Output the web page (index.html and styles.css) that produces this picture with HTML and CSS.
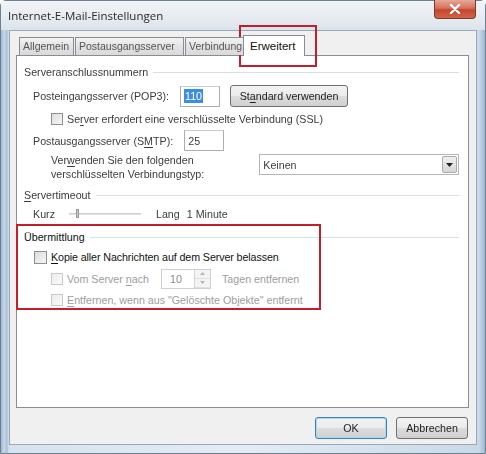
FILE: index.html
```html
<!DOCTYPE html>
<html>
<head>
<meta charset="utf-8">
<link rel="stylesheet" href="styles.css">
</head>
<body>
<div class="window">
  <div class="titlebar">
    <span class="title">Internet-E-Mail-Einstellungen</span>
    <span class="close"><svg width="12" height="10" viewBox="0 0 12 10"><path d="M2 1 L10 9 M10 1 L2 9" stroke="#fff" stroke-width="2.4" stroke-linecap="round"/></svg></span>
  </div>
  <div class="client">
    <div class="tabs">
      <div class="tab t1">Allgemein</div>
      <div class="tab t2">Postausgangsserver</div>
      <div class="tab t3">Verbindung</div>
      <div class="tab sel">Erweitert</div>
    </div>
    <div class="panel">
      <div class="group">
        <span class="glabel">Serveranschlussnummern</span><span class="gline"></span>
      </div>
      <div class="row pop">
        <span class="lbl">Posteingangsserver (POP3):</span>
        <span class="input in1"><span class="hl">110</span></span>
        <span class="btn std">St<u>a</u>ndard verwenden</span>
      </div>
      <div class="row ssl">
        <span class="cb"></span><span class="lbl">Se<u>r</u>ver erfordert eine verschlüsselte Verbindung (SSL)</span>
      </div>
      <div class="row smtp">
        <span class="lbl">Postausgangsserver (S<u>M</u>TP):</span>
        <span class="input in2">25</span>
      </div>
      <div class="row enc">
        <span class="lbl two">Ver<u>w</u>enden Sie den folgenden<br>verschlüsselten Verbindungstyp:</span>
        <span class="select"><span class="selval">Keinen</span><span class="drop"><svg width="7" height="4" viewBox="0 0 7 4"><path d="M0 0 H7 L3.5 4 Z" fill="#222"/></svg></span></span>
      </div>
      <div class="group g2">
        <span class="glabel"><u>S</u>ervertimeout</span><span class="gline"></span>
      </div>
      <div class="row slide">
        <span class="lbl">Kurz</span>
        <span class="slider"><span class="track"></span><span class="thumb"></span></span>
        <span class="lbl lang">Lang</span>
        <span class="lbl">1 Minute</span>
      </div>
      <div class="group g3 sharp">
        <span class="glabel">Übermittlung</span><span class="gline"></span>
      </div>
      <div class="row kopie sharp">
        <span class="cb"></span><span class="lbl"><u>K</u>opie aller Nachrichten auf dem Server belassen</span>
      </div>
      <div class="row vom sharp dis">
        <span class="cb off"></span><span class="lbl">Vom Server <u>n</u>ach</span>
        <span class="spin"><span class="spinval">10</span><span class="arrows"><span class="ar"><svg width="5" height="3" viewBox="0 0 5 3"><path d="M0 3 L2.5 0 L5 3Z" fill="#b5b5b5"/></svg></span><span class="ar"><svg width="5" height="3" viewBox="0 0 5 3"><path d="M0 0 H5 L2.5 3Z" fill="#b5b5b5"/></svg></span></span></span>
        <span class="lbl tagen">Tagen entfernen</span>
      </div>
      <div class="row entf sharp dis">
        <span class="cb off"></span><span class="lbl"><u>E</u>ntfernen, wenn aus "Gelöschte Objekte" entfernt</span>
      </div>
      <div class="mark m2"></div>
    </div>
    <div class="buttons">
      <span class="btn ok">OK</span>
      <span class="btn cancel">Abbrechen</span>
    </div>
  </div>
  <div class="mark m1"></div>
</div>
</body>
</html>
```
FILE: styles.css
```css
* { box-sizing: border-box; }
html, body { margin: 0; padding: 0; }
body {
  width: 486px; height: 454px; overflow: hidden;
  font-family: "Liberation Sans", Arial, sans-serif;
  font-size: 10.7px; color: #333;
}
.window {
  position: relative;
  width: 486px; height: 454px;
  background: linear-gradient(90deg, #9db4cc 0px, #c8d8e8 3px, #aac0d6 6px, #d6e2ee 8px, #e4ecf3 50%, #c9d9e8 478px, #a6bdd5 483px, #8aa3bd 486px);
  padding: 0 8px 8px 8px;
  display: flex; flex-direction: column;
  border: 1px solid #6d7f93;
  border-radius: 6px 6px 0 0;
}
.titlebar {
  height: 29px; display: flex; align-items: flex-start; justify-content: space-between;
  margin: 0 -8px; padding: 0 8px;
  background: linear-gradient(180deg, #f2f4f6 0%, #e6ebf0 60%, #dbe3eb 100%);
}
.title {
  margin-top: 7px; margin-left: -1px;
  font-family: "Open Sans", sans-serif; font-size: 11.5px; color: #2a2a2a;
  filter: blur(0.3px);
}
.close {
  width: 42px; height: 19px; margin-top: -1px; margin-right: 1px;
  display: flex; align-items: center; justify-content: center;
  background: linear-gradient(180deg, #e6a89a 0%, #d9715c 45%, #c5452d 55%, #d26447 100%);
  border: 1px solid #7a3a30; border-top: none;
  border-radius: 0 0 4px 4px;
}
.client {
  flex: 1; background: #f0f0f0;
  border: 1px solid #9aa8b6;
  display: flex; flex-direction: column;
  padding: 3px 7px 0 6px;
}
.tabs { display: flex; align-items: flex-end; height: 21px; padding-left: 3px; position: relative; z-index: 2; }
.tab {
  height: 18px; padding: 0 3px; line-height: 17px; white-space: nowrap; overflow: hidden;
  border: 1px solid #898c95; border-bottom: none;
  background: linear-gradient(180deg, #f2f2f2, #e3e3e3 50%, #d9d9d9);
  color: #555; font-size: 10.5px; margin-right: 1px;
  filter: blur(0.35px);
}
.t1 { width: 55px; }
.t2 { width: 109px; }
.t3 { width: 62px; margin-right: -4px; }
.tab.sel {
  height: 21px; width: 62px; background: #fff; color: #111;
  margin-left: 0; position: relative; top: 1px;
  border-color: #898c95; line-height: 20px; padding-left: 6px;
  filter: none; font-size: 11.5px;
}
.panel {
  position: relative;
  height: 353px; background: #fff;
  border: 1px solid #898c95;
  padding: 9px 9px 0 7px;
  display: flex; flex-direction: column;
}
.group { display: flex; align-items: center; height: 14px; color: #3a3a3a; filter: blur(0.35px); }
.glabel { white-space: nowrap; }
.gline { flex: 1; height: 0; border-top: 1px solid #d5dfe5; margin-left: 5px; }
.row { display: flex; align-items: center; padding-left: 9px; filter: blur(0.35px); color: #3c3c3c; white-space: nowrap; }
.pop { height: 22px; margin-top: 6px; }
.input {
  height: 21px; border: 1px solid #abadb3; border-top-color: #c8cbd1; background: #fff;
  display: flex; align-items: center; padding-left: 3px;
}
.in1 { width: 40px; margin-left: 11px; }
.hl { background: #3d8ee0; color: #fff; padding: 0 1px; line-height: 14px; }
.btn {
  display: flex; align-items: center; justify-content: center;
  height: 22px; border: 1px solid #707070; border-radius: 3px;
  background: linear-gradient(180deg, #f2f2f2 0%, #ebebeb 50%, #dddddd 51%, #cfcfcf 100%);
  color: #222;
}
.std { width: 118px; margin-left: 10px; }
.row.ssl { height: 16px; margin-top: 4px; padding-left: 27px; }
.cb {
  width: 12px; height: 12px; border: 1px solid #8f8f8f;
  background: linear-gradient(135deg, #dcdcdc, #f6f6f6);
  margin-right: 4px; flex: none;
}
.smtp { height: 21px; margin-top: 3px; }
.in2 { width: 40px; margin-left: 11px; }
.row.enc { height: 30px; margin-top: 1px; padding-left: 27px; align-items: flex-start; }
.two { line-height: 14px; margin-top: 1px; }
.select {
  margin-left: 55px; margin-top: 2px; width: 201px; height: 21px;
  border: 1px solid #b5b5b5; background: #fff; display: flex; align-items: center; justify-content: space-between;
  padding-left: 3px;
}
.drop {
  width: 15px; height: 17px; margin-right: 1px;
  display: flex; align-items: center; justify-content: center;
  background: linear-gradient(180deg, #f0f0f0, #d6d6d6); border: 1px solid #a9a9a9; border-radius: 2px;
}
.g2 { margin-top: 6px; }
.slide { height: 16px; margin-top: 4px; }
.slider { position: relative; width: 74px; height: 12px; margin-left: 12px; }
.track { position: absolute; left: 2px; right: 0; top: 5px; height: 2px; background: #e2e2e2; border-top: 1px solid #cfcfcf; }
.thumb { position: absolute; left: 9px; top: 1px; width: 3px; height: 9px; background: #c9c9c9; border: 1px solid #9a9a9a; }
.lang { margin-left: 15px; margin-right: 7px; }
.sharp { filter: none; }
.g3 { margin-top: 8px; color: #111; }
.row.kopie { height: 16px; margin-top: 5px; padding-left: 10px; color: #111; letter-spacing: -0.1px; }
.kopie .cb { width: 13px; height: 13px; }
.row.dis { color: #9d9d9d; padding-left: 27px; }
.cb.off { border-color: #c9c9c9; background: linear-gradient(135deg, #ececec, #fafafa); }
.vom { height: 21px; margin-top: 3px; }
.spin {
  width: 50px; height: 20px; margin-left: 12px; border: 1px solid #cfcfcf; background: #fff;
  display: flex; justify-content: space-between; align-items: stretch;
}
.spinval { padding-left: 8px; display: flex; align-items: center; color: #8a8a8a; }
.arrows { width: 16px; display: flex; flex-direction: column; border-left: 1px solid #d5d5d5; }
.ar { flex: 1; display: flex; align-items: center; justify-content: center; background: #f4f4f4; border-bottom: 1px solid #e0e0e0; }
.tagen { margin-left: 11px; }
.entf { height: 16px; margin-top: 3px; }
.mark { position: absolute; border: 2px solid #c0202c; pointer-events: none; }
.m1 { left: 238px; top: 24px; width: 78px; height: 42px; }
.m2 { left: -1px; top: 168px; width: 305px; height: 86px; }
.buttons { display: flex; justify-content: flex-end; gap: 9px; margin-top: 9px; padding-right: 1px; }
.ok { width: 72px; height: 22px; border-color: #3c7fb1; box-shadow: inset 0 0 0 1px #a6dcf5; filter: blur(0.35px); }
.cancel { width: 72px; height: 22px; filter: blur(0.35px); }
u { text-decoration-thickness: 1px; text-underline-offset: 2px; }
```
